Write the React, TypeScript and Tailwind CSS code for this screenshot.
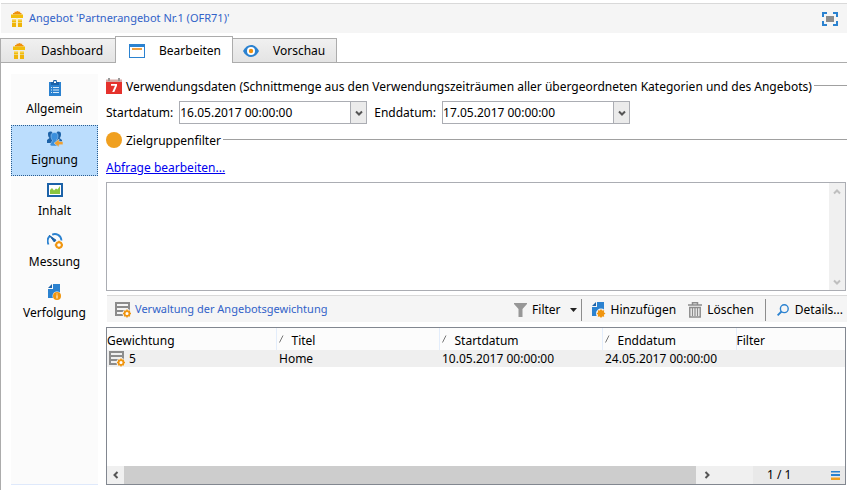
import type { ReactNode } from "react";

function GiftIcon() {
  return (
    <svg width="16" height="16" viewBox="0 0 16 16" className="shrink-0" aria-hidden="true">
      <path d="M4 3.500V2h1.500V.8H7L8.500 0 10 .8h1.200V2h1.300v1.500z" fill="#f0900c" />
      <path d="M2 3.500h12V7H2zM3 8h4v3.500H3zM9 8h4v3.500H9z" fill="#f2bd0a" />
      <path d="M3 12h4v4H3zM9 12h4v4H9z" fill="#efb40a" />
      <path d="M7.200 7h1.600v9H7.200z" fill="#fdf0c4" />
      <path d="M3 8h4v1.500H3zM9 8h4v1.500H9z" fill="#f9dc78" />
    </svg>
  );
}

function WindowIcon() {
  return (
    <svg width="16" height="14" viewBox="0 0 16 14" className="shrink-0" aria-hidden="true">
      <path d="M0 0h16v14H0z" fill="#2b82d0" />
      <path d="M1 3h14v10H1z" fill="#fff" />
      <path d="M3 4h10v2H3z" fill="#f0a040" />
    </svg>
  );
}

function EyeIcon() {
  return (
    <svg width="16" height="12" viewBox="0 0 16 12" className="shrink-0" aria-hidden="true">
      <path d="M0 6C2 2 5 0 8 0s6 2 8 6c-2 4-5 6-8 6S2 10 0 6z" fill="#2b82d0" />
      <circle cx="8" cy="6" r="4" fill="#fff" />
      <circle cx="8" cy="6" r="2.200" fill="#f0900c" />
    </svg>
  );
}

function ExpandIcon() {
  return (
    <svg width="16" height="14" viewBox="0 0 16 14" aria-hidden="true">
      <path d="M1 5V1h4M11 1h4v4M15 9v4h-4M5 13H1V9" fill="none" stroke="#2b82d0" strokeWidth="2" />
      <path d="M4 4h8v6H4z" fill="#8c8c8c" />
    </svg>
  );
}

function ClipboardIcon() {
  return (
    <svg width="16" height="16" viewBox="0 0 16 16" aria-hidden="true">
      <path d="M2 2h12v14H2z" fill="#2b82d0" />
      <path d="M4 2h2l.500-2h3L10 2h2v3H4z" fill="#1c62a8" />
      <path d="M7 1.200h2V3H7z" fill="#fff" />
      <path d="M4 7h1v1H4zM6 7h6v1H6zM4 9.500h1v1H4zM6 9.500h6v1H6zM4 12h1v1H4zM6 12h6v1H6z" fill="#d5e8f8" />
    </svg>
  );
}

function AudienceIcon() {
  return (
    <svg width="16" height="16" viewBox="0 0 16 16" aria-hidden="true">
      <path d="M1 3c0-3 4-3 4.500-1h4C10 0 14 0 14 3c0 2-.5 3.500-1.500 4L15 9v3H0V9l2.500-2C1.500 6 1 5 1 3z" fill="#1c62a8" />
      <path d="M7.500 1.500C10 1.500 11 3 11 5s-1 3.500-1.500 4l3 2.500V14l-1 1H4l-1-1.500 2.500-4C4.500 8 4 7 4 5s1-3.500 3.500-3.500z" fill="#3b8fdc" stroke="#bbddfd" strokeWidth=".5" />
      <path d="M16 10.500h-4V8l-5 4.200 5 4V13.800h4z" fill="#f0a030" stroke="#bbddfd" strokeWidth=".6" />
    </svg>
  );
}

function PictureIcon() {
  return (
    <svg width="16" height="14" viewBox="0 0 16 14" aria-hidden="true">
      <path d="M0 0h16v14H0z" fill="#1c62a8" />
      <path d="M2 2h12v10H2z" fill="#fff" />
      <path d="M3 11V7l2-2 2 2.500 2-2 1.500 1L13 3v8z" fill="#8cc63f" />
    </svg>
  );
}

function GaugeIcon() {
  return (
    <svg width="16" height="16" viewBox="0 0 16 16" aria-hidden="true">
      <path d="M1.500 11.500C0 8 1 4.500 3 2.800M5.200 1.600C9 0 14 2 14.500 7.500" fill="none" stroke="#2b82d0" strokeWidth="1.800" />
      <path d="M2.500 2.500L9 7.200 7.300 9z" fill="#1c62a8" stroke="#1c62a8" />
      <circle cx="12" cy="12" r="2.800" fill="#fff" stroke="#f0950f" strokeWidth="2" />
      <path d="M12 7.800v1.200M12 15v1.200M7.800 12H9M15 12h1.200" stroke="#f0950f" strokeWidth="1.500" />
    </svg>
  );
}

function TrackingIcon() {
  return (
    <svg width="16" height="16" viewBox="0 0 16 16" aria-hidden="true">
      <path d="M6 0h7v14H1V5h5z" fill="#2b82d0" />
      <path d="M5 0v4H1z" fill="#1c62a8" />
      <circle cx="10" cy="12" r="4.500" fill="#fbfbfb" />
      <circle cx="10" cy="12" r="4" fill="#f0950f" />
      <path d="M9.500 9.500h1v1h-1zM9.500 11.300h1V14.500h-1z" fill="#fff" />
    </svg>
  );
}

function CalendarIcon() {
  return (
    <svg width="16" height="16" viewBox="0 0 16 16" className="shrink-0" aria-hidden="true">
      <path d="M0 4h16v12H0z" fill="#e5322d" />
      <path d="M0 1.500h16V4H0z" fill="#d8a8a4" />
      <path d="M2 0h2v3H2zM12 0h2v3h-2z" fill="#9a9a9a" />
      <path d="M5 6h6v1.800L8.300 14H6.200L9 7.800H5z" fill="#fff" />
    </svg>
  );
}

function WeightIcon() {
  return (
    <svg width="16" height="16" viewBox="0 0 16 16" className="shrink-0" aria-hidden="true">
      <path d="M1 0v14M14 0v9M0 1h15M0 5h15M0 9h9M0 13h8" fill="none" stroke="#8c8c8c" strokeWidth="2" />
      <circle cx="12" cy="11.500" r="4.600" fill="#f2f2f2" />
      <circle cx="12" cy="11.500" r="2.400" fill="#fff" stroke="#f0950f" strokeWidth="1.700" />
      <path d="M12 7.500v1.400M12 14.100v1.400M8 11.500h1.400M14.600 11.500H16M9.200 8.700l1 1M13.800 13.300l1 1M14.800 8.700l-1 1M10.200 13.300l-1 1" stroke="#f0950f" strokeWidth="1.400" />
    </svg>
  );
}

function FunnelIcon() {
  return (
    <svg width="13" height="14" viewBox="0 0 13 14" aria-hidden="true">
      <path d="M0 0h13v1L8.500 6v8h-4V6L0 1z" fill="#979797" />
    </svg>
  );
}

function AddIcon() {
  return (
    <svg width="14" height="16" viewBox="0 0 14 16" aria-hidden="true">
      <path d="M5 0h7v14H0V5h5z" fill="#2b82d0" />
      <path d="M4 0v4H0z" fill="#1c62a8" />
      <circle cx="9" cy="11.500" r="5" fill="#f5f5f5" />
      <path d="M9 7l1.200 1.600 2-.3-.3 2L13.500 11.500l-1.600 1.200.3 2-2-.3L9 16l-1.200-1.600-2 .3.3-2L4.500 11.500l1.600-1.200-.3-2 2 .3z" fill="#f0950f" />
    </svg>
  );
}

function TrashIcon() {
  return (
    <svg width="14" height="16" viewBox="0 0 14 16" aria-hidden="true">
      <path d="M0 3h14M4.500 3V.8h5V3" fill="none" stroke="#8c8c8c" strokeWidth="1.500" />
      <path d="M1.800 5.500h10.400V15H1.800z" fill="none" stroke="#8c8c8c" strokeWidth="1.500" />
      <path d="M4.500 6v8M7 6v8M9.500 6v8" stroke="#8c8c8c" strokeWidth="1.300" />
    </svg>
  );
}

function MagnifierIcon() {
  return (
    <svg width="12" height="12" viewBox="0 0 12 12" aria-hidden="true">
      <circle cx="7.300" cy="4.700" r="3.900" fill="none" stroke="#2b82d0" strokeWidth="1.400" />
      <path d="M4.500 7.500L.6 11.400" stroke="#2b82d0" strokeWidth="1.800" />
    </svg>
  );
}

const chevrons = {
  down: "M1 2.500l3 3 3-3",
  up: "M1 5.500l3-3 3 3",
  left: "M5.500 1l-3 3 3 3",
  right: "M2.500 1l3 3-3 3",
};

function Chevron({ dir }: { dir: keyof typeof chevrons }) {
  return (
    <svg width="8" height="8" viewBox="0 0 8 8" aria-hidden="true">
      <path d={chevrons[dir]} fill="none" stroke="currentColor" strokeWidth="2" />
    </svg>
  );
}

function SortMark() {
  return (
    <svg width="5" height="8" viewBox="0 0 5 8" className="mb-1 shrink-0" aria-hidden="true">
      <path d="M.5 7.500L4 .5" stroke="#777" />
    </svg>
  );
}

function Group({ icon, title }: { icon: ReactNode; title: string }) {
  return (
    <h2 className="flex h-5 items-center">
      {icon}
      <span className="ml-1 pt-0.5">{title}</span>
      <span className="mb-0.5 ml-0.5 h-px flex-1 bg-[#a0a0a0]" />
    </h2>
  );
}

function DateField({ id, label, value }: { id: string; label: string; value: string }) {
  return (
    <div className="flex items-center gap-1.5">
      <label htmlFor={id} className="whitespace-nowrap">
        {label}
      </label>
      <div className="flex h-[23px] w-[188px] border border-[#abadb3]">
        <input id={id} type="text" defaultValue={value} className="min-w-0 flex-1 bg-white outline-none" />
        <button
          type="button"
          aria-label={`${label} wählen`}
          className="flex w-4 items-center justify-center border-l border-[#abadb3] bg-[#ebebeb] text-[#555]"
        >
          <Chevron dir="down" />
        </button>
      </div>
    </div>
  );
}

const tabs = [
  { label: "Dashboard", icon: <GiftIcon />, active: false },
  { label: "Bearbeiten", icon: <WindowIcon />, active: true },
  { label: "Vorschau", icon: <EyeIcon />, active: false },
];

const sections = [
  { label: "Allgemein", icon: <ClipboardIcon />, active: false },
  { label: "Eignung", icon: <AudienceIcon />, active: true },
  { label: "Inhalt", icon: <PictureIcon />, active: false },
  { label: "Messung", icon: <GaugeIcon />, active: false },
  { label: "Verfolgung", icon: <TrackingIcon />, active: false },
];

const columns = [
  { label: "Gewichtung", sorted: false, width: "w-[169px]" },
  { label: "Titel", sorted: true, width: "w-[163px]" },
  { label: "Startdatum", sorted: true, width: "w-[163px]" },
  { label: "Enddatum", sorted: true, width: "w-[134px]" },
  { label: "Filter", sorted: false, width: "" },
];

export default function App() {
  return (
    <div className="bg-white pt-[3px] font-['Noto_Sans','Open_Sans',sans-serif] text-xs text-black">
      <header className="ml-px flex h-[30px] items-center border-t border-[#d9d9d9] bg-[#f5f5f5] pr-[9px] pl-2">
        <GiftIcon />
        <h1 className="ml-1 text-[11px] text-[#3262c8]">Angebot 'Partnerangebot Nr.1 (OFR71)'</h1>
        <button type="button" aria-label="Vollbild" className="ml-auto">
          <ExpandIcon />
        </button>
      </header>

      <div role="tablist" className="mt-[3px] flex items-end border-b border-[#acacac]">
        {tabs.map((tab) => (
          <button
            key={tab.label}
            type="button"
            role="tab"
            aria-selected={tab.active}
            className={
              tab.active
                ? "-mb-px flex h-[27px] w-[118px] items-center gap-3.5 border border-b-0 border-[#acacac] bg-white pt-px pl-[13px]"
                : "flex h-6 items-center gap-3.5 border border-b-0 border-[#acacac] bg-linear-to-b from-[#f0f0f0] to-[#e4e4e4] px-2.5 pt-px first:w-[115px] first:border-r-0 last:w-[104px] last:border-l-0"
            }
          >
            {tab.icon}
            {tab.label}
          </button>
        ))}
      </div>

      <div className="flex border-l border-[#acacac] pt-[11px] pb-[5px] pl-[10px]">
        <nav className="flex w-[87px] shrink-0 flex-col border-b border-[#dfe9fb] bg-[#fbfbfb]">
          {sections.map((section) => (
            <button
              key={section.label}
              type="button"
              aria-current={section.active ? "page" : undefined}
              className={`flex h-[51px] flex-col items-center gap-[5px] pt-1.5 ${
                section.active ? "bg-[#bbddfd] outline-1 -outline-offset-1 outline-dotted outline-[#2a5d90]" : ""
              }`}
            >
              <span className="flex h-4 items-center">{section.icon}</span>
              {section.label}
            </button>
          ))}
        </nav>

        <main className="ml-2 min-w-0 flex-1">
          <section className="pt-0.5">
            <Group
              icon={<CalendarIcon />}
              title="Verwendungsdaten (Schnittmenge aus den Verwendungszeiträumen aller übergeordneten Kategorien und des Angebots)"
            />
            <div className="mt-[5px] flex gap-[7px]">
              <DateField id="start" label="Startdatum:" value="16.05.2017 00:00:00" />
              <DateField id="end" label="Enddatum:" value="17.05.2017 00:00:00" />
            </div>
          </section>

          <section className="mt-1.5">
            <Group
              icon={<span className="size-4 shrink-0 rounded-full bg-[#f0a020]" />}
              title="Zielgruppenfilter"
            />
            <div className="mt-2.5 flex">
              <a href="#abfrage" className="text-[#0000ee] underline">
                Abfrage bearbeiten...
              </a>
            </div>
            <div className="mt-1.5 mr-px flex h-[109px] border border-[#abadb3]">
              <textarea aria-label="Abfrage" className="min-w-0 flex-1 resize-none outline-none" />
              <div className="flex w-4 flex-col justify-between bg-[#f0f0f0] text-[#bfbfbf]">
                <button type="button" aria-label="Nach oben" className="flex h-[17px] items-center justify-center">
                  <Chevron dir="up" />
                </button>
                <button type="button" aria-label="Nach unten" className="flex h-[17px] items-center justify-center">
                  <Chevron dir="down" />
                </button>
              </div>
            </div>
          </section>

          <section className="mt-1">
            <div className="ml-px flex h-[27px] items-center border-t border-[#d9d9d9] bg-[#f5f5f5] pt-px pr-1 pl-2">
              <WeightIcon />
              <h2 className="ml-1 text-[11px] text-[#3262c8]">Verwaltung der Angebotsgewichtung</h2>
              <div className="ml-auto flex items-center">
                <button type="button" className="flex items-center gap-[5px]">
                  <FunnelIcon />
                  Filter
                  <svg width="7" height="4" viewBox="0 0 7 4" className="ml-1" aria-hidden="true">
                    <path d="M0 0h7L3.500 4z" fill="#222" />
                  </svg>
                </button>
                <span className="mx-1 h-[22px] w-px bg-[#8c8c8c]" />
                <button type="button" className="ml-1.5 flex items-center gap-[5px]">
                  <AddIcon />
                  Hinzufügen
                </button>
                <button type="button" className="ml-3 flex items-center gap-[5px]">
                  <TrashIcon />
                  Löschen
                </button>
                <span className="mx-[11px] h-[22px] w-px bg-[#8c8c8c]" />
                <button type="button" className="flex items-center gap-1.5">
                  <MagnifierIcon />
                  Details...
                </button>
              </div>
            </div>

            <div className="mt-[5px] mr-px flex h-[158px] flex-col border border-[#828790]">
              <table className="w-full table-fixed border-collapse text-left">
                <thead>
                  <tr className="h-[22px] bg-[#fcfcfc]">
                    {columns.map((column) => (
                      <th
                        key={column.label}
                        scope="col"
                        className={`border-r border-[#e3edfb] p-0 font-normal last:border-r-0 ${column.width}`}
                      >
                        <div className={`flex items-center gap-2 pt-1 ${column.sorted ? "pl-0.5" : ""}`}>
                          {column.sorted && <SortMark />}
                          {column.label}
                        </div>
                      </th>
                    ))}
                  </tr>
                </thead>
                <tbody>
                  <tr className="h-[17px] bg-[#efefef]">
                    <td className="px-0 pt-px pb-0">
                      <div className="flex items-center gap-1 pl-0.5">
                        <WeightIcon />5
                      </div>
                    </td>
                    <td className="pt-px pr-0 pb-0 pl-[3px]">Home</td>
                    <td className="pt-px pr-0 pb-0 pl-[3px]">10.05.2017 00:00:00</td>
                    <td className="pt-px pr-0 pb-0 pl-[3px] whitespace-nowrap">24.05.2017 00:00:00</td>
                    <td className="p-0" />
                  </tr>
                </tbody>
              </table>
              <div className="mt-auto flex h-[18px] bg-[#f0f0f0] text-[#555]">
                <button type="button" aria-label="Nach links" className="flex w-[17px] items-center justify-center">
                  <Chevron dir="left" />
                </button>
                <div className="flex-1 bg-[#cdcdcd]" />
                <button type="button" aria-label="Nach rechts" className="mr-[35px] flex w-[22px] items-center justify-center">
                  <Chevron dir="right" />
                </button>
                <div className="flex w-[92px] items-center justify-between bg-[#e9e9e9] pr-[5px] pl-[14px] text-black">
                  1 / 1
                  <svg width="9" height="9" viewBox="0 0 9 9" aria-hidden="true">
                    <path d="M0 0h9v1.500H0zM0 3h9v2H0z" fill="#2b82d0" />
                    <path d="M0 6.500h9V9H0z" fill="#f0a020" />
                  </svg>
                </div>
              </div>
            </div>
          </section>
        </main>
      </div>
    </div>
  );
}
